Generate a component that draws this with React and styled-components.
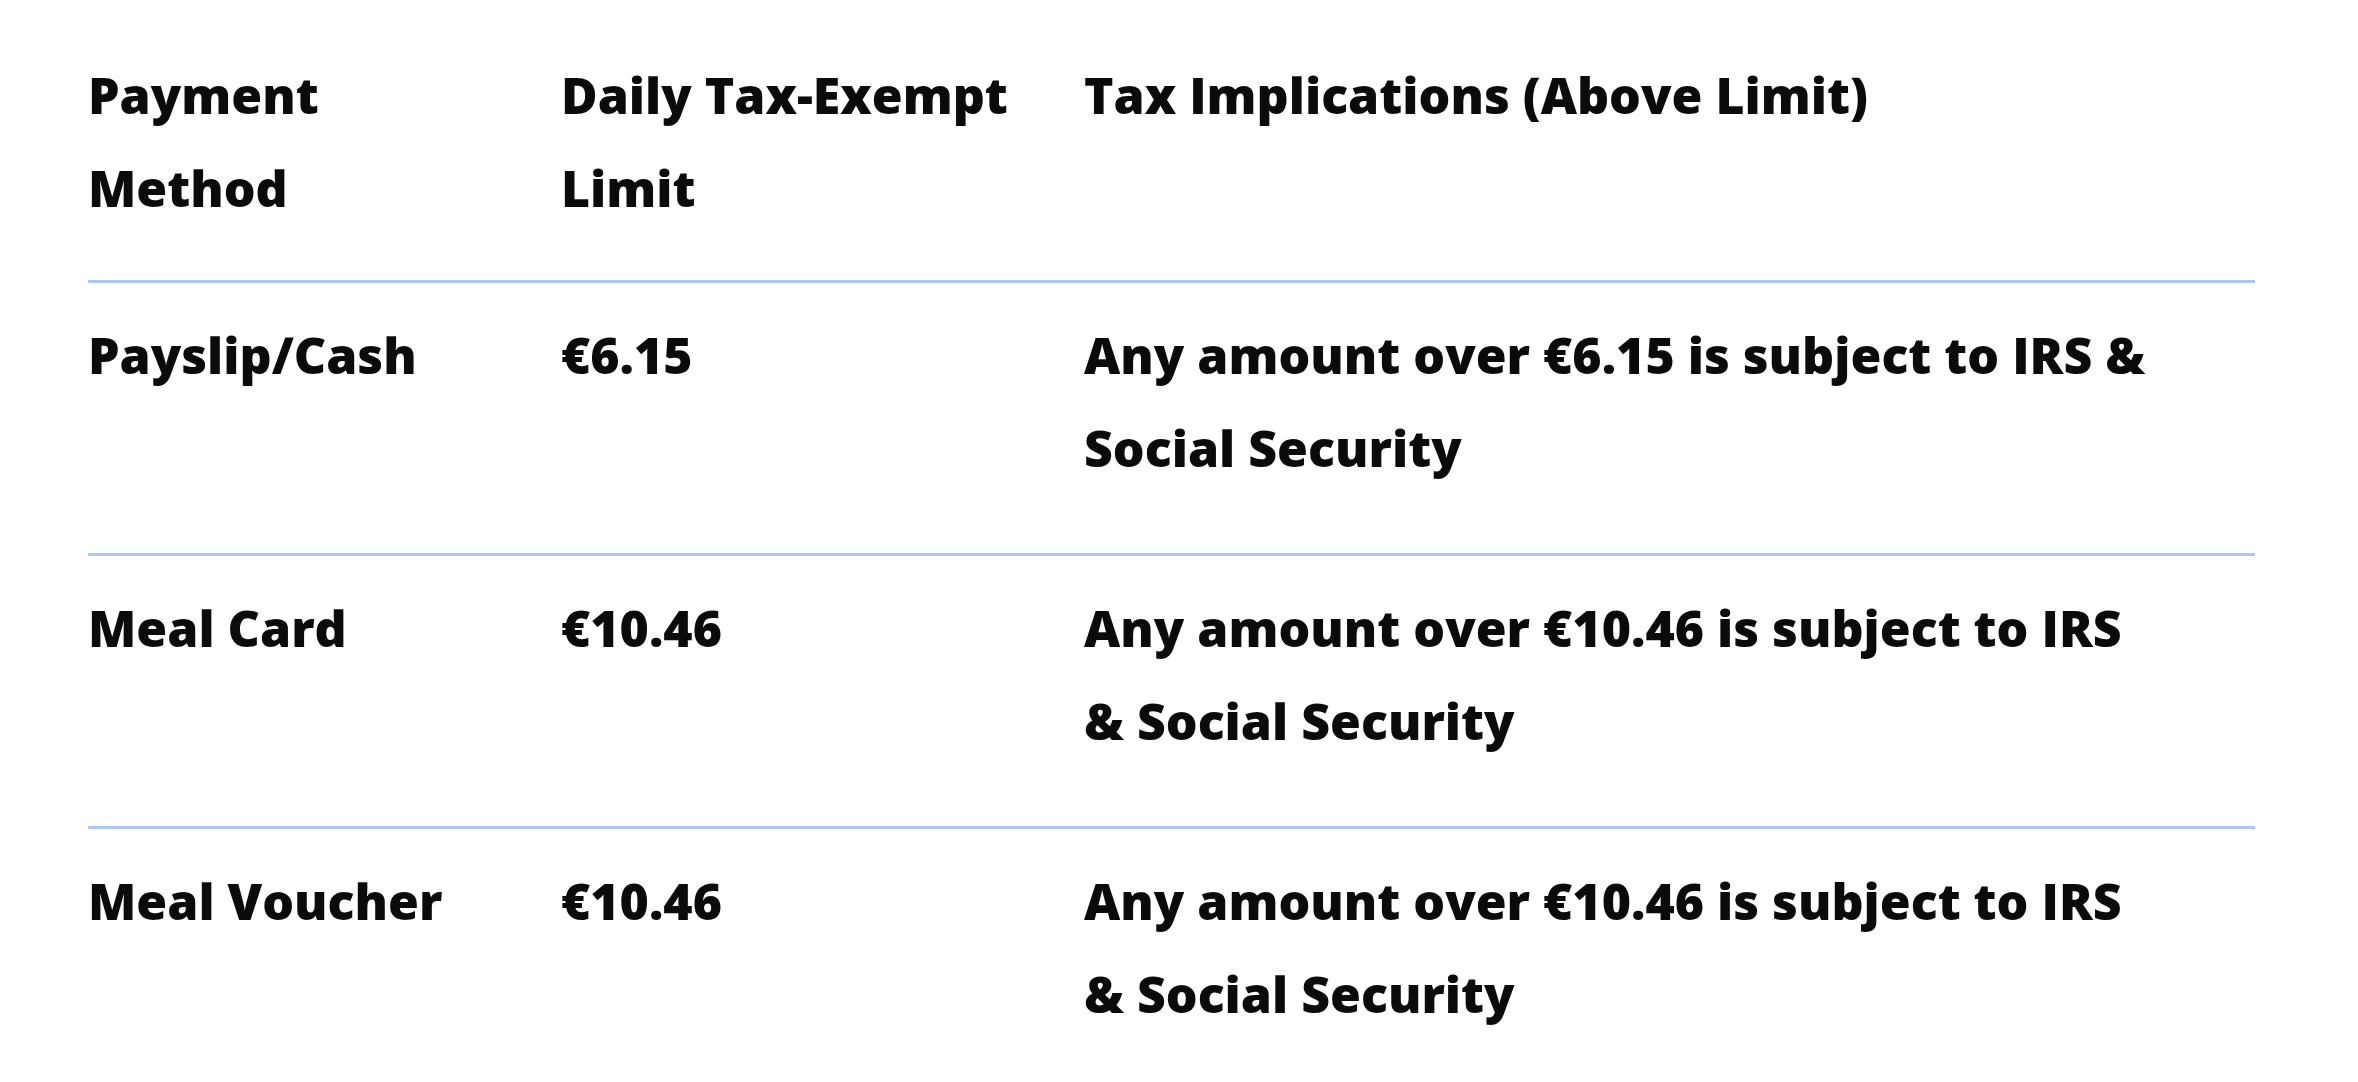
import React from 'react';
import styled, { createGlobalStyle } from 'styled-components';

const GlobalStyle = createGlobalStyle`
	html, body {
		margin: 0;
		padding: 0;
		background: #ffffff;
	}
	body {
		font-family: 'Open Sans', 'Liberation Sans', sans-serif;
		color: #0b0b0b;
	}
`;

const Wrapper = styled.div`
	width: 2167px;
	padding-left: 88px;
`;

// one row of the table (header or body)
const Row = styled.div`
	display: grid;
	grid-template-columns: 473px 523px 1066px;
	padding: ${(p) => (p.$head ? '49px 0 45px' : '26px 0 58px')};
	border-top: ${(p) => (p.$head ? 'none' : '3px solid #a9c7fa')};
`;

const Cell = styled.div`
	padding-right: 48px;
	font-size: 50px;
	font-weight: 800;
	line-height: 93px;
	letter-spacing: 0;
	&:last-child {
		padding-right: 0;
	}
`;

const rows = [
	['Payslip/Cash', '€6.15', 'Any amount over €6.15 is subject to IRS & Social Security'],
	['Meal Card', '€10.46', 'Any amount over €10.46 is subject to IRS & Social Security'],
	['Meal Voucher', '€10.46', 'Any amount over €10.46 is subject to IRS & Social Security'],
];

const App = () => {
	return (
		<Wrapper>
			<GlobalStyle />
			<Row $head>
				<Cell>Payment Method</Cell>
				<Cell>Daily Tax-Exempt Limit</Cell>
				<Cell>Tax Implications (Above Limit)</Cell>
			</Row>
			{rows.map((r) => (
				<Row key={r[0]}>
					<Cell>{r[0]}</Cell>
					<Cell>{r[1]}</Cell>
					<Cell>{r[2]}</Cell>
				</Row>
			))}
		</Wrapper>
	);
};

export default App;
